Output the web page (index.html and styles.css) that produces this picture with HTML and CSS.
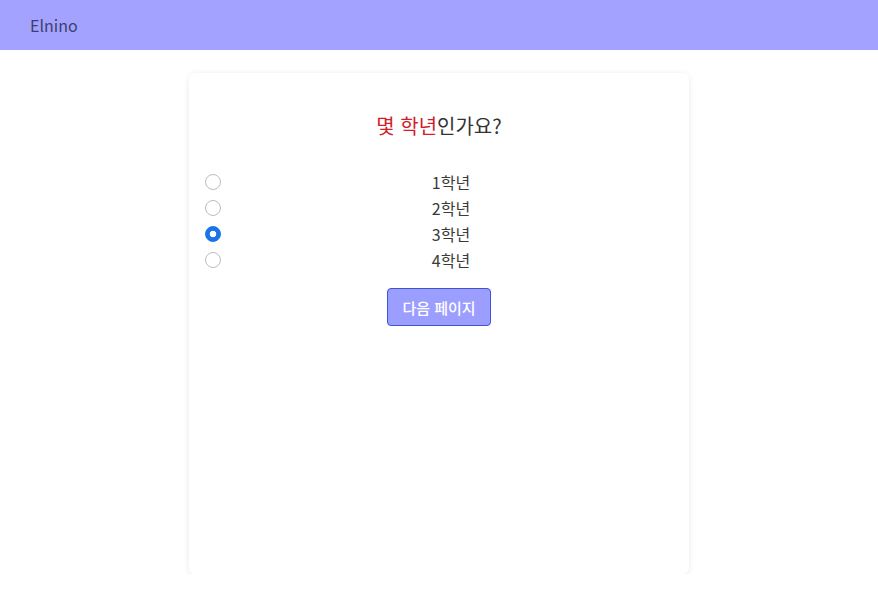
FILE: index.html
```html
<!DOCTYPE html>
<html lang="ko">
<head>
<meta charset="utf-8">
<link rel="stylesheet" href="styles.css">
</head>
<body>
<header class="topbar"><span class="brand">Elnino</span></header>
<main class="page">
  <section class="card">
    <h2 class="question"><span class="hl">몇 학년</span>인가요?</h2>
    <div class="options">
      <label class="option"><input type="radio" name="grade"><span class="opt-text">1학년</span></label>
      <label class="option"><input type="radio" name="grade"><span class="opt-text">2학년</span></label>
      <label class="option"><input type="radio" name="grade" checked><span class="opt-text">3학년</span></label>
      <label class="option"><input type="radio" name="grade"><span class="opt-text">4학년</span></label>
    </div>
    <div class="actions"><button class="next">다음 페이지</button></div>
  </section>
</main>
</body>
</html>
```
FILE: styles.css
```css
* { box-sizing: border-box; }
body {
  margin: 0;
  font-family: "Noto Sans CJK KR", "Noto Sans", sans-serif;
  color: #333;
  background: #fff;
}
.topbar {
  height: 50px;
  background: #a3a3ff;
  display: flex;
  align-items: center;
  padding-left: 30px;
}
.brand {
  font-size: 16px;
  color: #3e3e6e;
}
.page {
  display: flex;
  justify-content: center;
  padding-top: 23px;
}
.card {
  width: 500px;
  height: 501px;
  background: #fff;
  border-radius: 6px;
  box-shadow: 0 1px 6px rgba(0,0,0,0.09);
  padding: 35px 16px 0;
}
.question {
  margin: 0 0 25px;
  text-align: center;
  font-size: 20px;
  font-weight: 400;
  line-height: 36px;
  color: #333;
}
.hl { color: #d0202a; }
.options {
  display: flex;
  flex-direction: column;
}
.option {
  display: flex;
  align-items: center;
  height: 26px;
  font-size: 16px;
  color: #3a3a3a;
}
.option input {
  appearance: none;
  -webkit-appearance: none;
  margin: 0;
  width: 16px;
  height: 16px;
  border-radius: 50%;
  border: 1px solid #bdbdbd;
  background: #fff;
}
.option input:checked {
  border-color: #1a73e8;
  background: radial-gradient(circle, #fff 0 3px, #1a73e8 3.6px);
}
.opt-text {
  flex: 1;
  text-align: center;
  margin-left: 8px;
}
.actions {
  display: flex;
  justify-content: center;
  margin-top: 15px;
}
.next {
  width: 104px;
  height: 38px;
  background: #9b9dff;
  border: 1px solid #3f55cc;
  border-radius: 4px;
  color: #fff;
  font-family: inherit;
  font-size: 15px;
  font-weight: 500;
  padding: 0;
}
```
